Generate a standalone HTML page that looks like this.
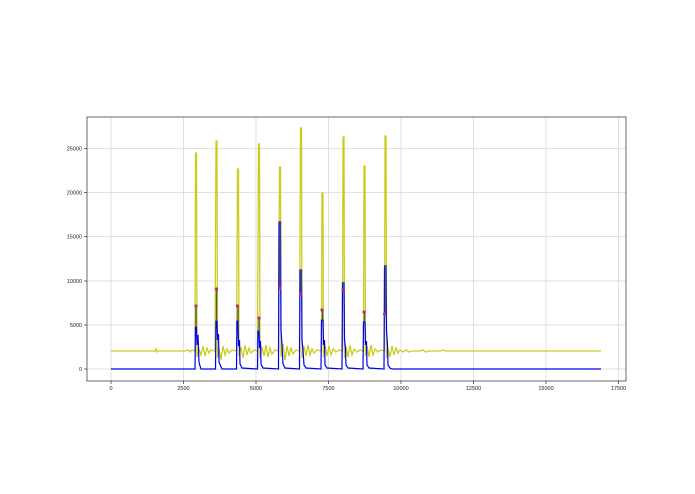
<!DOCTYPE html>
<html><head><style>
html,body{margin:0;padding:0;background:#fff;}
svg{display:block;font-family:"Liberation Sans",sans-serif;}
</style></head><body>
<svg width="695" height="494" viewBox="0 0 695 494" xmlns="http://www.w3.org/2000/svg">
<rect width="695" height="494" fill="#fff"/>
<g stroke="#d8d8d8" stroke-width="0.8">
<line x1="111" y1="117" x2="111" y2="381"/><line x1="183.5" y1="117" x2="183.5" y2="381"/>
<line x1="256" y1="117" x2="256" y2="381"/><line x1="328.5" y1="117" x2="328.5" y2="381"/>
<line x1="401" y1="117" x2="401" y2="381"/><line x1="473.5" y1="117" x2="473.5" y2="381"/>
<line x1="546" y1="117" x2="546" y2="381"/><line x1="618.5" y1="117" x2="618.5" y2="381"/>
<line x1="87" y1="369" x2="626" y2="369"/><line x1="87" y1="325" x2="626" y2="325"/>
<line x1="87" y1="281" x2="626" y2="281"/><line x1="87" y1="236.5" x2="626" y2="236.5"/>
<line x1="87" y1="192.5" x2="626" y2="192.5"/><line x1="87" y1="148.5" x2="626" y2="148.5"/>
</g>
<polyline fill="none" stroke="#cccc20" stroke-width="1.3" points="111,351 155,351 156,349 157,352 158,351 185,351 188,350 190,352 192,350 194,351
195,351 195.5,153 196.5,153 197,357 199,349 201,355 203,346 205,356 207,348 209,353 211,350 214,351
215,351 216,141 217,141 217.5,358 219,348 221,360 223,346 225,355 227,349 229,353 232,350 236,351
236.5,351 237.5,169 238.5,169 239,356 241,347 243,358 245,345 247,355 249,348 251,353 254,350 257,351
257.5,351 258.5,144 259.5,144 260,358 262,347 264,356 266,345 268,357 270,348 272,354 275,350 278,351
278.5,351 279.5,167 280.5,167 281,357 283,344 285,360 287,346 289,356 291,348 293,354 296,350 299,351
299.5,351 300.5,128 301.5,128 302,358 304,346 306,356 308,345 310,355 312,349 314,353 317,350 321,351
321.5,351 322,193 323,193 323.5,357 325,345 327,356 329,346 331,355 333,349 336,352 339,350 342,351
342.5,351 343,137 344,137 344.5,358 346,347 348,357 350,345 352,355 354,349 357,352 360,350 363,351
363.5,351 364,166 365,166 365.5,356 367,346 369,357 371,345 373,355 375,349 378,352 381,350 384,351
384.5,351 385,136 386,136 386.5,358 388,349 390,357 392,346 394,355 396,348 398,353 400,350 403,352 406,350 409,352 412,351 420,351 423,350 426,352 429,351 440,351 443,350 446,351 601,351"/>
<polyline fill="none" stroke="#0000f0" stroke-width="1.2" points="111,369 195,369 195.5,327 196.5,327 197,345 198,335 199,362 200,366 201,369 215,369
215.5,369 216,321 217,321 217.5,340 218.5,334 219,362 221,367 222,369 236.5,369 237,321 238,321 238.5,346 239.5,340 240,364 242,368 257.5,369
258,331 259,331 259.5,348 260.5,341 261,364 263,368 278.5,369 279,222 280.5,222 281,330 282,345 283,364 285,368 299.5,369
300,270 301.5,270 302,340 303,350 304,365 306,368 321,369 321.5,320 323,320 323.5,345 324.5,340 325,365 327,368 342,369
342.5,283 344,283 344.5,340 345.5,348 346,365 348,368 363,369 363.5,322 365,322 365.5,345 366.5,341 367,365 369,368 384,369
384.5,266 386,266 386.5,330 387.5,345 388,365 390,368 392,369 601,369"/>
<g stroke="#555" stroke-width="1.4">
<line x1="196" y1="306" x2="196" y2="327"/><line x1="216.5" y1="289" x2="216.5" y2="321"/>
<line x1="238" y1="306" x2="238" y2="321"/><line x1="259" y1="318" x2="259" y2="331"/>
<line x1="280" y1="289" x2="280" y2="222"/><line x1="301" y1="295" x2="301" y2="270"/>
<line x1="322.5" y1="310" x2="322.5" y2="320"/><line x1="343.5" y1="291" x2="343.5" y2="283"/>
<line x1="364.5" y1="312" x2="364.5" y2="322"/><line x1="385.5" y1="314" x2="385.5" y2="266"/>
</g>
<g fill="#b03070">
<circle cx="196" cy="306" r="1.6"/><circle cx="216.5" cy="289" r="1.6"/><circle cx="237.5" cy="306" r="1.6"/>
<circle cx="259" cy="318" r="1.6"/><circle cx="280" cy="288" r="1.6"/><circle cx="300.5" cy="294" r="1.6"/>
<circle cx="322" cy="310" r="1.6"/><circle cx="343" cy="290" r="1.6"/><circle cx="364" cy="312" r="1.6"/>
<circle cx="384.5" cy="314" r="1.6"/>
</g>
<rect x="87" y="117" width="539" height="264" fill="none" stroke="#444" stroke-width="0.8"/>
<g stroke="#444" stroke-width="0.8">
<line x1="111" y1="381" x2="111" y2="384"/><line x1="183.5" y1="381" x2="183.5" y2="384"/>
<line x1="256" y1="381" x2="256" y2="384"/><line x1="328.5" y1="381" x2="328.5" y2="384"/>
<line x1="401" y1="381" x2="401" y2="384"/><line x1="473.5" y1="381" x2="473.5" y2="384"/>
<line x1="546" y1="381" x2="546" y2="384"/><line x1="618.5" y1="381" x2="618.5" y2="384"/>
<line x1="84" y1="369" x2="87" y2="369"/><line x1="84" y1="325" x2="87" y2="325"/>
<line x1="84" y1="281" x2="87" y2="281"/><line x1="84" y1="236.5" x2="87" y2="236.5"/>
<line x1="84" y1="192.5" x2="87" y2="192.5"/><line x1="84" y1="148.5" x2="87" y2="148.5"/>
</g>
<g font-size="5.5" fill="#222" text-anchor="middle">
<text x="111" y="390">0</text><text x="183.5" y="390">2500</text><text x="256" y="390">5000</text>
<text x="328.5" y="390">7500</text><text x="401" y="390">10000</text><text x="473.5" y="390">12500</text>
<text x="546" y="390">15000</text><text x="618.5" y="390">17500</text>
</g>
<g font-size="5.5" fill="#222" text-anchor="end">
<text x="82" y="371">0</text><text x="82" y="327">5000</text><text x="82" y="283">10000</text>
<text x="82" y="238.5">15000</text><text x="82" y="194.5">20000</text><text x="82" y="150.5">25000</text>
</g>
</svg>
</body></html>
